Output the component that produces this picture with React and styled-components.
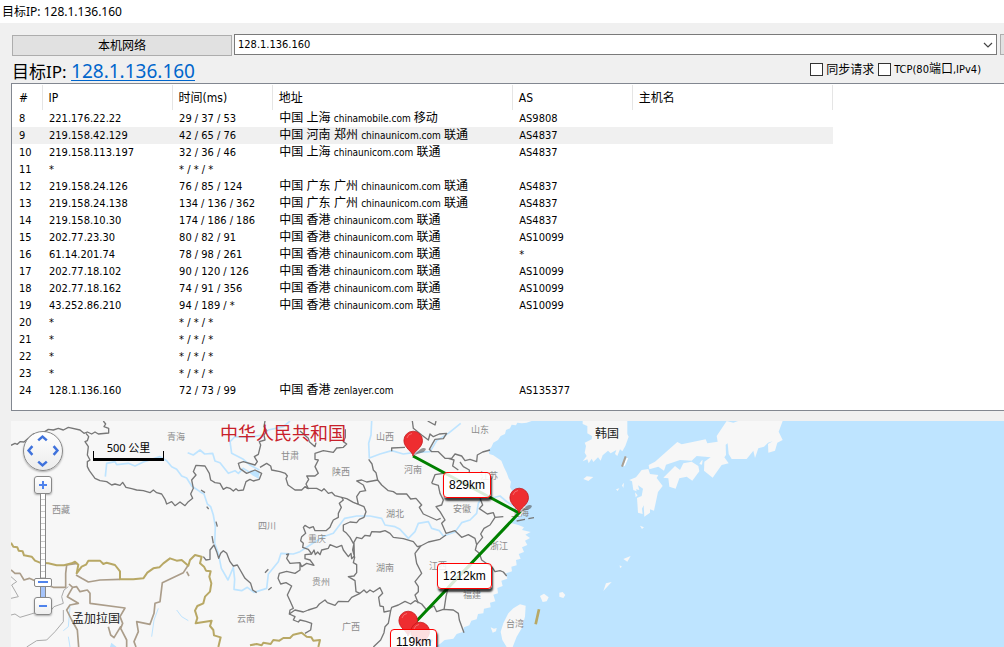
import React, { useState } from "react";
import styled, { createGlobalStyle, css } from "styled-components";

const columns = [
	{ title: "#", width: 30 },
	{ title: "IP", width: 130 },
	{ title: "时间(ms)", width: 100 },
	{ title: "地址", width: 240 },
	{ title: "AS", width: 120 },
	{ title: "主机名", width: 200 },
];

const hops = [
	[8, "221.176.22.22", "29 / 37 / 53", "中国 上海", "chinamobile.com", "移动", "AS9808"],
	[9, "219.158.42.129", "42 / 65 / 76", "中国 河南 郑州", "chinaunicom.com", "联通", "AS4837"],
	[10, "219.158.113.197", "32 / 36 / 46", "中国 上海", "chinaunicom.com", "联通", "AS4837"],
	[11, "*", "* / * / *", "", "", "", ""],
	[12, "219.158.24.126", "76 / 85 / 124", "中国 广东 广州", "chinaunicom.com", "联通", "AS4837"],
	[13, "219.158.24.138", "134 / 136 / 362", "中国 广东 广州", "chinaunicom.com", "联通", "AS4837"],
	[14, "219.158.10.30", "174 / 186 / 186", "中国 香港", "chinaunicom.com", "联通", "AS4837"],
	[15, "202.77.23.30", "80 / 82 / 91", "中国 香港", "chinaunicom.com", "联通", "AS10099"],
	[16, "61.14.201.74", "78 / 98 / 261", "中国 香港", "chinaunicom.com", "联通", "*"],
	[17, "202.77.18.102", "90 / 120 / 126", "中国 香港", "chinaunicom.com", "联通", "AS10099"],
	[18, "202.77.18.162", "74 / 91 / 356", "中国 香港", "chinaunicom.com", "联通", "AS10099"],
	[19, "43.252.86.210", "94 / 189 / *", "中国 香港", "chinaunicom.com", "联通", "AS10099"],
	[20, "*", "* / * / *", "", "", "", ""],
	[21, "*", "* / * / *", "", "", "", ""],
	[22, "*", "* / * / *", "", "", "", ""],
	[23, "*", "* / * / *", "", "", "", ""],
	[24, "128.1.136.160", "72 / 73 / 99", "中国 香港", "zenlayer.com", "", "AS135377"],
];

// x and y are the centre of each label on the map
const places = [
	{ name: "青海", x: 165, y: 15 },
	{ name: "西藏", x: 50, y: 88 },
	{ name: "甘肃", x: 279, y: 34 },
	{ name: "陕西", x: 330, y: 50 },
	{ name: "四川", x: 256, y: 104 },
	{ name: "重庆", x: 306, y: 117 },
	{ name: "贵州", x: 310, y: 160 },
	{ name: "云南", x: 235, y: 197 },
	{ name: "广西", x: 340, y: 205 },
	{ name: "山西", x: 374, y: 15 },
	{ name: "山东", x: 469, y: 8 },
	{ name: "河南", x: 402, y: 48 },
	{ name: "江苏", x: 478, y: 54 },
	{ name: "安徽", x: 451, y: 87 },
	{ name: "上海", x: 509, y: 91 },
	{ name: "湖北", x: 384, y: 92 },
	{ name: "浙江", x: 488, y: 124 },
	{ name: "湖南", x: 374, y: 146 },
	{ name: "江西", x: 427, y: 144 },
	{ name: "福建", x: 461, y: 173 },
	{ name: "台湾", x: 504, y: 202 },
	{ name: "中华人民共和国", x: 272, y: 11, kind: "title" },
	{ name: "韩国", x: 596, y: 12, kind: "country" },
	{ name: "孟加拉国", x: 85, y: 197, kind: "country" },
];

const pins = [
	{ x: 402, y: 35 },
	{ x: 508, y: 92 },
	{ x: 397, y: 215 },
	{ x: 409, y: 226 },
];

const distances = [
	{ text: "829km", x: 432, y: 51 },
	{ text: "1212km", x: 426, y: 142 },
	{ text: "119km", x: 379, y: 208 },
];

const App = () => {
	const [target, setTarget] = useState("128.1.136.160");
	const [selected, setSelected] = useState(9);

	return (
		<>
			<GlobalStyle />
			<Window>
				<TitleBar>目标IP: 128.1.136.160</TitleBar>
				<Toolbar>
					<PushButton type="button">本机网络</PushButton>
					<Combo>
						<select
							aria-label="目标IP"
							value={target}
							onChange={(e) => setTarget(e.target.value)}
						>
							<option value="128.1.136.160">128.1.136.160</option>
						</select>
						<svg width="10" height="6" viewBox="0 0 10 6">
							<path d="M1 1l4 4 4-4" fill="none" stroke="#444" strokeWidth="1.2" />
						</svg>
					</Combo>
					<EdgeButton type="button" aria-label="go" />
				</Toolbar>
				<TargetBar>
					<Target>
						目标IP: <a href="#target">128.1.136.160</a>
					</Target>
					<Options>
						<Check htmlFor="sync">
							<input type="checkbox" id="sync" />
							<Cjk>同步请求</Cjk>
						</Check>
						<Check htmlFor="tcp">
							<input type="checkbox" id="tcp" />
							<span>
								TCP(80<Cjk>端口</Cjk>,IPv4)
							</span>
						</Check>
					</Options>
				</TargetBar>
				<ListView>
					<HopTable>
						<colgroup>
							{columns.map((col) => (
								<Col key={col.title} $width={col.width} />
							))}
						</colgroup>
						<thead>
							<tr>
								{columns.map((col) => (
									<th key={col.title}>{col.title}</th>
								))}
							</tr>
						</thead>
						<tbody>
							{hops.map(([id, ip, time, place, host, isp, as]) => (
								<HopRow
									key={id}
									$selected={id === selected}
									onClick={() => setSelected(id)}
								>
									<td>{id}</td>
									<td>{ip}</td>
									<td>{time}</td>
									<td>
										<Cjk>{place}</Cjk> <Host>{host}</Host> <Cjk>{isp}</Cjk>
									</td>
									<td>{as}</td>
									<td></td>
								</HopRow>
							))}
						</tbody>
					</HopTable>
				</ListView>
				<RouteMap />
			</Window>
		</>
	);
};

const RouteMap = () => {
	const [zoom, setZoom] = useState(2);
	return (
		<MapPane>
			<MapDrawing />
			{places.map((p) => (
				<Place key={p.name} $x={p.x} $y={p.y} $kind={p.kind}>
					{p.name}
				</Place>
			))}
			<RouteLine width="993" height="226" viewBox="0 0 993 226">
				<path
					d="M402 35L508 92L398 208"
					fill="none"
					stroke="#008000"
					strokeWidth="3"
				/>
			</RouteLine>
			{pins.map((p) => (
				<Pin key={p.x} $x={p.x} $y={p.y} />
			))}
			{distances.map((d) => (
				<Distance key={d.text} $x={d.x} $y={d.y}>
					{d.text}
				</Distance>
			))}
			<Controls>
				<Pan>
					<PanButton type="button" aria-label="up" $area="1 / 2">
						<Arrow turn={0} />
					</PanButton>
					<PanButton type="button" aria-label="left" $area="2 / 1">
						<Arrow turn={-90} />
					</PanButton>
					<PanButton type="button" aria-label="right" $area="2 / 3">
						<Arrow turn={90} />
					</PanButton>
					<PanButton type="button" aria-label="down" $area="3 / 2">
						<Arrow turn={180} />
					</PanButton>
				</Pan>
				<ZoomButton
					type="button"
					aria-label="zoom in"
					onClick={() => setZoom(Math.min(18, zoom + 1))}
				>
					<svg width="8" height="8" viewBox="0 0 8 8">
						<path d="M4 0v8M0 4h8" stroke="#4f83ec" strokeWidth="2" />
					</svg>
				</ZoomButton>
				<ZoomSlider
					type="range"
					aria-label="zoom"
					min="0"
					max="18"
					value={zoom}
					onChange={(e) => setZoom(Number(e.target.value))}
				/>
				<ZoomButton
					type="button"
					aria-label="zoom out"
					onClick={() => setZoom(Math.max(0, zoom - 1))}
				>
					<svg width="8" height="8" viewBox="0 0 8 8">
						<path d="M0 4h8" stroke="#4f83ec" strokeWidth="2" />
					</svg>
				</ZoomButton>
			</Controls>
			<Scale>500 公里</Scale>
		</MapPane>
	);
};

const Arrow = ({ turn }) => (
	<svg width="11" height="11" viewBox="0 0 11 11">
		<path
			d="M1.2 7.4L5.5 3.6L9.8 7.4"
			fill="none"
			stroke="#3f72dc"
			strokeWidth="2.5"
			transform={`rotate(${turn} 5.5 5.5)`}
		/>
	</svg>
);

const Pin = ({ $x, $y }) => (
	<PinIcon $x={$x} $y={$y} width="32" height="28" viewBox="0 0 32 28">
		<path d="M10 25.500L17 19.500Q21 17 23 19Q22 22.500 16 23.500Z" fill="#555" opacity=".6" />
		<path
			d="M10 26C9.500 21.500 .9 18 .9 10.500A9.300 9.300 0 0 1 19.500 10.500C19.500 18 10.500 21.500 10 26Z"
			fill="#ee2d30"
			stroke="#c3161b"
			strokeWidth=".8"
		/>
		<path d="M4 8Q5 4 9 3.500" fill="none" stroke="#f4696b" />
	</PinIcon>
);

// three drawing units to a pixel, one group for each part of the map
const MapDrawing = () => (
	<MapSvg width="993" height="226" viewBox="33 33 2979 678" aria-hidden="true">
		<g fill="#f7f7f7">
			<path d="M33 33H1595L1580 38L1565 40L1552 38L1548 46L1535 44L1530 55L1518 60L1515 72L1502 78L1494 90L1480 98L1474 112L1465 120L1468 132L1480 136L1492 144L1504 152L1512 172L1520 188L1526 205L1533 215L1530 232L1538 245L1555 262L1568 280L1578 294L1570 308L1562 318L1540 330L1530 338L1555 345L1572 352L1566 360L1592 366L1576 374L1590 384L1575 392L1582 405L1566 412L1572 426L1556 432L1562 446L1548 450L1550 466L1534 470L1536 484L1518 490L1522 506L1504 512L1508 528L1492 534L1494 550L1480 554L1486 574L1470 578L1472 592L1452 596L1450 610L1434 612L1430 628L1414 632L1408 646L1392 652L1388 666L1370 672L1360 686L1334 690L1320 702L1300 711H33Z" />
			<path d="M1577 587L1560 583L1540 595L1525 610L1510 640L1502 665L1507 690L1520 711H1538L1550 680L1565 655L1575 620Z" />
			<path d="M1472 652L1482 656L1490 654L1488 664L1478 668ZM1620 558L1632 551L1646 562L1640 574L1628 576ZM1678 548L1688 546L1696 555L1690 564L1678 560Z" />
		</g>
		<g transform="translate(1620 0)" fill="#f7f7f7">
			<path d="M128 33H262V72L266 80L256 108L247 124L240 118L232 138L225 132L229 120L212 130L204 122L188 136L182 152L174 142L160 156L155 146L146 160L142 148L128 154L140 138L134 128L138 108L134 98L155 88L156 78L142 70V48L128 42Z" />
			<path d="M326 165L345 155L412 96L425 103L497 88L502 100L533 95L530 78L560 33L580 38L594 33H728L716 65L728 90L712 98L705 122L685 128L684 102L698 94L684 98L672 110L655 115L645 144L640 122L620 147H575L566 132L563 100L557 104L558 135L553 142L566 160L545 165L518 203L492 182L493 155L512 142L470 138L455 152L420 150L378 164L372 182L355 170L328 178Z" />
			<path d="M370 203L405 168L420 180L430 160L455 155L475 168L478 184L457 212L440 200L418 205L407 236L388 230L385 205Z" />
			<path d="M305 180L325 177L330 192L355 195L350 204L368 228L354 246L342 302L330 298V308L313 320L311 286L306 296L308 312L294 308L291 264L305 258L309 236L294 226L298 240L288 238L290 244L280 240L276 214L268 210L288 202Z" />
			<path d="M130 207L140 199L160 201L145 213ZM250 447L272 438L262 455ZM190 543L198 520L215 516ZM239 466L246 470L240 474ZM300 347L312 352L306 357ZM228 238L238 235L233 243ZM246 226L252 218L250 234ZM478 162L484 152L488 150L486 164ZM285 247L293 256L287 262Z" />
			<path d="M262 144L252 168" stroke="#fff" strokeWidth="5" />
			<path d="M257 139L246 170" stroke="#a99f92" strokeWidth="6" />
		</g>

		<g fill="none" stroke="#bee4ff" strokeWidth="5" strokeLinejoin="round">
			<path d="M316 200L320 160L345 155L350 164L385 160L405 168L430 156L480 140L500 152L515 170L530 178L545 198L560 204L575 228L600 245L612 252L622 282L632 290L640 315L646 350L644 400L655 430L664 475L684 510L700 472L704 508L702 538L725 542L742 532L762 547L800 535L805 492L835 455L843 430L880 432L900 425L930 405L970 380L1000 370L1034 325L1070 318H1110L1145 325L1155 345L1185 350L1200 358L1225 385L1245 365L1255 340L1285 335L1295 355L1318 362L1330 378L1365 366L1385 338L1410 330L1430 310L1435 280L1450 258L1475 264L1500 258L1520 275L1560 300" />
			<path d="M563 128L580 135L600 120L614 132L638 130L645 153L660 158L685 190L705 182L715 190L730 175L778 205M690 95L695 130L730 148L750 165L778 180M690 95L705 80L740 82L790 75L805 60L850 50L870 33M1115 33L1113 75L1106 100L1108 144L1140 132L1175 122L1210 132L1240 128L1290 125L1310 92L1345 70L1382 40" />
			<path d="M475 595L462 630L455 680M530 600L545 620L565 632M210 590L205 650L190 662M205 680L210 711" strokeWidth="3" />
		</g>
		<path d="M330 711L334 698L350 711ZM750 180L780 185L775 204L756 195Z" fill="#bee4ff" />

		<g fill="none" stroke="#777" strokeWidth="4" strokeLinejoin="round">
			<path d="M33 106L45 100L52 103L60 95L72 96L100 72L115 74L130 68L145 58L160 60L175 55L190 60L205 52L240 60L252 70L262 66L275 72L285 66L295 72L326 69V55L312 50L317 42L310 33" />
			<path d="M258 70L266 80L262 92L255 95L265 110L262 135L270 150L262 155V170L268 182L285 205L300 212L320 215L335 225L345 222L360 226L368 217L378 232L395 236L410 240L430 242L450 248L460 240L470 248L485 252L495 268L500 282L515 275L525 287L540 276L555 287L565 275L578 265L572 252L580 235L575 210L588 195L580 185L588 166L615 168L628 190L632 210L645 218L660 220L670 238L680 232L690 235L700 243L708 236L715 242L730 240L738 215L750 208L760 213L778 208L785 190L765 180L740 190L720 176L715 160L730 155L765 165L772 155L763 140L775 133L782 105L778 95L795 90L792 75L800 62L792 50L795 33" />
			<path d="M780 172L800 160L812 168L815 180L840 185L856 190L862 198L858 206L864 225L885 240H905L915 230L925 236L918 222L926 208L920 198L945 198L955 190L945 170L955 150L945 148L945 130L970 122L1000 127L1010 114L1030 112L1040 102L1030 95L1036 82V58M900 63L925 85L928 95L945 110L948 98" />
			<path d="M920 235H950L965 243L972 236L985 250L995 247L1005 257L1025 262L1040 266L1060 277L1075 283L1070 260L1080 245L1097 242L1090 225L1070 213L1085 210L1100 216L1133 210L1128 188L1120 180L1116 162L1106 148M1133 210L1145 225L1165 242L1180 245L1190 252L1220 252L1232 267L1248 265L1265 285L1258 292L1270 312L1310 330L1322 325" />
			<path d="M1075 283L1092 290L1098 305L1092 322L1078 328L1070 338L1050 336L1030 345V362L1038 368L1050 382L1060 400L1070 382L1085 386L1095 376L1110 378L1115 365L1140 366L1155 362L1170 370L1180 382L1210 386L1240 395L1252 410L1262 408L1245 430L1250 460L1260 480L1265 490L1245 515L1255 530L1255 545L1245 555L1255 580" />
			<path d="M1025 262L1030 270L1018 280L1024 292L1015 310V322L1000 330L995 340L990 352L978 362L945 362L940 350L928 354L915 346L910 352L917 370L905 380L902 392L910 400L908 412L925 418L935 432L942 420L946 434L953 426L960 434L965 420L985 415L990 404L1010 412L1025 406L1030 420L1045 440L1053 430L1055 446L1063 438L1062 400L1058 420L1064 442L1060 458L1070 464V488L1062 498L1045 500L1065 512L1068 545L1080 550L1092 540L1100 548L1110 540L1120 546L1140 533L1148 550L1136 562L1140 588L1150 590L1152 606L1172 602L1175 592L1195 585L1215 574L1232 582L1245 572L1265 582L1280 600L1302 588L1310 605L1330 598L1360 600L1375 610L1378 630L1392 668" />
			<path d="M935 432L915 434V446L930 450L942 466L920 460L905 470L900 458L870 460L860 445L866 432L858 434M900 458V480L885 490L860 484L838 490L834 505L842 522L858 518L875 528L862 555L870 572L880 595L870 600L868 612L885 600L910 606L925 600L950 592L958 582L975 570L982 578L1005 586L1015 574L1045 575L1055 562L1080 550" />
			<path d="M868 612L885 620L880 630L895 636L900 630L918 634L935 640L932 660L915 670M1172 602L1165 640L1155 650L1152 668L1142 690L1120 711" />
			<path d="M610 440L618 450L630 448V420L642 405L650 425L656 445L662 430L670 422L680 430L690 455L700 468L712 465L735 505L752 520L758 540L770 548M603 240L615 248M620 290L626 297M648 335L652 350M636 378L640 400M795 488L805 478M805 540L815 532" />
			<path d="M1237 33L1240 55L1265 75L1285 90L1290 72L1300 80L1318 72L1340 70L1330 86L1305 88L1298 100L1288 118L1295 125L1315 125L1335 145L1355 145L1365 132L1385 138L1395 152L1410 148L1430 155L1432 135L1448 126L1470 120M1175 124V114L1215 112M1283 33L1305 45L1308 33M1345 145L1362 150L1358 168L1375 180M1295 220L1305 194L1330 190M1380 156L1390 170L1408 180V190M1295 220L1315 226L1320 250L1330 270L1325 285L1308 290L1320 305L1335 330L1325 340L1338 370L1365 362L1385 382L1405 374L1425 385L1430 404L1426 420L1438 430L1445 450L1462 462L1475 470L1485 485L1500 482L1510 486L1520 498" />
			<path d="M1440 265L1448 285L1438 296L1462 312L1480 308L1485 322L1470 345L1452 355L1442 372L1448 382L1430 404M1485 322L1510 320M1262 408L1285 396L1320 388L1338 375M1438 430L1425 445L1410 470L1370 500L1345 530L1338 560L1335 580L1332 600M1550 333L1575 328M1585 326L1602 323" />
		</g>
		<path d="M33 500L50 515L35 525L55 560L33 565M33 615L45 612L60 622L100 610L150 605L162 590L190 580L185 560L192 540L205 530M190 600V635L165 665L140 690L110 692L80 711" fill="none" stroke="#aaa" strokeWidth="3" />
		<g fill="none" stroke="#ab9d8a" strokeWidth="5" strokeLinejoin="round">
			<path d="M33 480L45 490H60L72 510L88 505L105 512L140 525L160 532H197V490L200 465L232 460M228 495L245 505L265 516L300 510L360 508M565 465L550 488L487 518L480 575L465 580L462 610L450 643L410 635L415 665L402 695L408 711M560 485L567 498" />
			<path d="M207 522L218 532L230 530L240 545L262 540L270 550V580L375 594L360 620L368 640L362 655L380 690V711M218 532L202 560L235 580L210 585L200 600L215 630L232 660L236 711M325 650L332 675L342 683L362 650" />
		</g>
		<g fill="none" stroke="#b8a865" strokeWidth="6" strokeLinejoin="round">
			<path d="M33 398L40 410L52 412L56 422L68 424L72 436L95 440L105 452L120 458L145 460L170 466L192 466L215 460L225 455L235 464L230 490L245 470L258 464L265 452L300 452L310 462L320 458L345 465L360 484V508L400 508L430 505L442 488L460 475L478 472L490 460L510 445L530 452L545 450L565 467L570 450L585 435L605 440L600 460L612 470L618 482L632 484L628 500L634 520L630 545L615 560L610 580L592 588L585 602L592 624L587 640L635 632L630 648L640 660L642 676L662 682L655 711" />
			<path d="M750 706L770 702L785 706L790 698L812 702L820 690L838 692L850 684L870 684L880 674L905 668L920 680L934 682L940 692L960 690L955 711" />
			<path d="M1617 598L1607 643" strokeWidth="8" />
		</g>
	</MapSvg>
);

const GlobalStyle = createGlobalStyle`
	* {
		box-sizing: border-box;
	}
	body {
		margin: 0;
		background: #f0f0f0;
		color: #000;
		font-family: "DejaVu Sans Condensed", "Noto Sans CJK SC", sans-serif;
		font-size: 11px;
	}
	button,
	select,
	input {
		font-family: inherit;
		margin: 0;
	}
`;

const Window = styled.main`
	display: flex;
	flex-direction: column;
	height: 100vh;
	overflow: hidden;
`;

const TitleBar = styled.header`
	flex: none;
	height: 23px;
	padding-left: 2px;
	background: #fff;
	font-family: "Noto Sans", "Noto Sans CJK SC", sans-serif;
	font-size: 12px;
	line-height: 23px;
`;

const Toolbar = styled.div`
	display: flex;
	flex: none;
	gap: 2px;
	padding: 11px 0 0 12px;
`;

const PushButton = styled.button`
	width: 220px;
	height: 21px;
	margin-top: 1px;
	padding: 2px 0 0;
	border: 1px solid #adadad;
	background: #e1e1e1;
	font-size: 12px;
	line-height: 17px;
`;

const Combo = styled.div`
	position: relative;
	flex: 1;
	select {
		display: block;
		width: 100%;
		height: 21px;
		padding: 0 3px;
		appearance: none;
		border: 1px solid #7a7a7a;
		border-radius: 0;
		background: #fff;
		color: #000;
		font-size: 11px;
	}
	svg {
		position: absolute;
		top: 8px;
		right: 4px;
		pointer-events: none;
	}
`;

const EdgeButton = styled.button`
	width: 5px;
	height: 21px;
	margin: 0 -1px 0 1px;
	padding: 0;
	border: 1px solid #adadad;
	background: #e1e1e1;
`;

const TargetBar = styled.div`
	display: flex;
	flex: none;
	justify-content: space-between;
	align-items: center;
	height: 27px;
	padding: 0 23px 0 12px;
`;

const Target = styled.div`
	padding-top: 4px;
	font-family: "Noto Sans", "Noto Sans CJK SC", sans-serif;
	font-size: 17px;
	line-height: 24px;
	white-space: nowrap;
	a {
		color: #0066cc;
		font-size: 19px;
		text-decoration-thickness: 1px;
		text-underline-offset: 2px;
	}
`;

const Options = styled.div`
	display: flex;
	gap: 4px;
`;

const Check = styled.label`
	display: flex;
	align-items: center;
	gap: 3px;
	line-height: 16px;
	white-space: nowrap;
	input {
		width: 13px;
		height: 13px;
		appearance: none;
		border: 1px solid #333;
		background: #fff;
	}
	input:checked {
		background: #333;
	}
`;

const Cjk = styled.span`
	font-size: 12px;
`;

const Host = styled.span`
	font-size: 10px;
`;

const ListView = styled.section`
	flex: none;
	margin-left: 11px;
	padding: 1px 0 11px;
	border: 1px solid #828790;
	border-right: none;
	background: #fff;
`;

const Col = styled.col`
	width: ${(props) => props.$width}px;
`;

const HopTable = styled.table`
	width: 821px;
	table-layout: fixed;
	border-collapse: collapse;
	th {
		height: 25px;
		padding: 0 6px;
		border-right: 1px solid #e5e5e5;
		font-size: 12px;
		font-weight: 400;
		line-height: 16px;
		text-align: left;
	}
	td {
		height: 17px;
		padding: 0 0 0 7px;
		line-height: 17px;
		white-space: nowrap;
	}
	th:first-child {
		padding-left: 7px;
	}
`;

const HopRow = styled.tr`
	${(props) =>
		props.$selected &&
		css`
			background: #f0f0f0;
		`}
`;

const MapPane = styled.section`
	position: relative;
	flex: 1;
	min-height: 0;
	margin: 10px 0 0 11px;
	overflow: hidden;
	background: #bee4ff;
`;

const MapSvg = styled.svg`
	display: block;
`;

const RouteLine = styled.svg`
	position: absolute;
	top: 0;
	left: 0;
`;

const Place = styled.span`
	position: absolute;
	left: ${(props) => props.$x}px;
	top: ${(props) => props.$y}px;
	transform: translate(-50%, -50%);
	color: #8c8c8c;
	font-family: "Noto Sans CJK SC", sans-serif;
	font-size: 9px;
	line-height: 1;
	white-space: nowrap;
	${(props) =>
		props.$kind === "country" &&
		css`
			color: #222;
			font-size: 12px;
		`}
	${(props) =>
		props.$kind === "title" &&
		css`
			color: #c8202a;
			font-size: 18px;
		`}
`;

const PinIcon = styled.svg`
	position: absolute;
	left: ${(props) => props.$x - 10}px;
	top: ${(props) => props.$y - 26}px;
`;

const Distance = styled.div`
	position: absolute;
	left: ${(props) => props.$x}px;
	top: ${(props) => props.$y}px;
	padding: 0 5px;
	border: 1px solid #f00;
	border-radius: 4px;
	background: rgba(255, 255, 255, 0.85);
	box-shadow: 1px 3px 2px rgba(0, 0, 0, 0.75);
	font-family: "Liberation Sans", Arial, sans-serif;
	font-size: 12px;
	line-height: 24px;
`;

const Controls = styled.div`
	position: absolute;
	top: 10px;
	left: 12px;
	display: flex;
	flex-direction: column;
	align-items: center;
`;

const Pan = styled.div`
	display: grid;
	grid-template: repeat(3, 1fr) / repeat(3, 1fr);
	width: 40px;
	height: 40px;
	margin-bottom: 5px;
	border: 1px solid #888;
	border-radius: 50%;
	background: linear-gradient(#fff, #ececec);
	box-shadow: 0 1px 2px rgba(0, 0, 0, 0.3);
`;

const PanButton = styled.button`
	display: flex;
	grid-area: ${(props) => props.$area};
	justify-content: center;
	align-items: center;
	padding: 0;
	border: none;
	background: none;
`;

const ZoomButton = styled.button`
	display: flex;
	justify-content: center;
	align-items: center;
	width: 18px;
	height: 18px;
	padding: 0;
	border: 1px solid #888;
	border-radius: 3px;
	background: linear-gradient(#fff, #eee);
	box-shadow: 0 1px 2px rgba(0, 0, 0, 0.3);
`;

const ZoomSlider = styled.input`
	width: 18px;
	height: 103px;
	appearance: none;
	background: none;
	writing-mode: vertical-lr;
	direction: rtl;
	&::-webkit-slider-runnable-track {
		width: 6px;
		height: 103px;
		border: solid #888;
		border-width: 0 1px;
		background: linear-gradient(transparent 90px, #a6c4fa 90px),
			repeating-linear-gradient(#fff 0 5px, #ccc 5px 6px);
	}
	&::-webkit-slider-thumb {
		width: 18px;
		height: 9px;
		margin-left: -7px;
		appearance: none;
		border: 1px solid #888;
		border-radius: 2px;
		background: linear-gradient(#4f83ec, #4f83ec) center / 10px 2px no-repeat #fff;
	}
`;

const Scale = styled.div`
	position: absolute;
	top: 19px;
	left: 82px;
	width: 71px;
	height: 21px;
	font-family: "Noto Sans", "Noto Sans CJK SC", sans-serif;
	font-size: 11px;
	line-height: 16px;
	text-align: center;
	&::after {
		content: "";
		position: absolute;
		right: 0;
		bottom: 0;
		left: 0;
		height: 7px;
		border: solid #000;
		border-width: 0 1px 3px;
	}
`;

export default App;
